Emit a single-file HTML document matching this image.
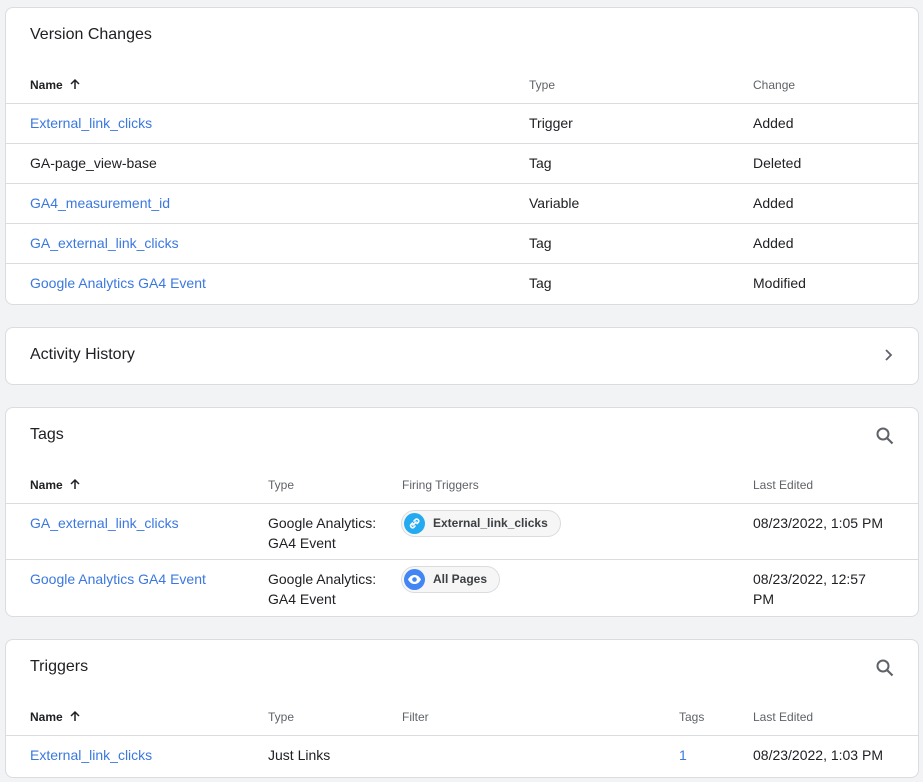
<!DOCTYPE html>
<html><head><meta charset="utf-8"><style>
*{margin:0;padding:0;box-sizing:border-box}
body{width:923px;height:782px;background:#f1f3f4;font-family:"Liberation Sans",Arial,sans-serif;position:relative;overflow:hidden;color:#202124}
.card{position:absolute;left:5px;width:914px;background:#fff;border:1px solid #dadce0;border-radius:8px}
.t{position:absolute;font-size:14px;line-height:20px;white-space:nowrap}
.title{position:absolute;left:24px;font-size:16px;line-height:22px;color:#202124}
.h{position:absolute;font-size:12px;line-height:16px;color:#5f6368;white-space:nowrap}
.hn{color:#202124;font-weight:bold}
.ln{position:absolute;left:0;right:0;height:1px;background:#dadce0}
.a{color:#3a78e0}
.chip{position:absolute;height:27px;border:1px solid #dadce0;border-radius:14px;background:#f6f6f6;font-size:12px;font-weight:bold;color:#3c4043;line-height:25px;padding-left:31px;padding-right:12px}
.ic{position:absolute;left:2px;top:2px;width:21px;height:21px;border-radius:50%}
</style></head><body>

<div class="card" style="top:7px;height:298px">
<div class="title" style="top:16px">Version Changes</div>
<div class="h hn" style="left:24px;top:69px">Name <svg width="12" height="12" viewBox="0 0 12 12" style="vertical-align:-1px;margin-left:3px"><path d="M6 11V2M2 6l4-4 4 4" stroke="#202124" stroke-width="1.5" fill="none"/></svg></div>
<div class="h" style="left:523px;top:69px">Type</div>
<div class="h" style="left:747px;top:69px">Change</div>
<div class="ln" style="top:95px"></div>
<div class="t a" style="left:24px;top:105px">External_link_clicks</div><div class="t" style="left:523px;top:105px">Trigger</div><div class="t" style="left:747px;top:105px">Added</div>
<div class="ln" style="top:135px"></div>
<div class="t" style="left:24px;top:145px">GA-page_view-base</div><div class="t" style="left:523px;top:145px">Tag</div><div class="t" style="left:747px;top:145px">Deleted</div>
<div class="ln" style="top:175px"></div>
<div class="t a" style="left:24px;top:185px">GA4_measurement_id</div><div class="t" style="left:523px;top:185px">Variable</div><div class="t" style="left:747px;top:185px">Added</div>
<div class="ln" style="top:215px"></div>
<div class="t a" style="left:24px;top:225px">GA_external_link_clicks</div><div class="t" style="left:523px;top:225px">Tag</div><div class="t" style="left:747px;top:225px">Added</div>
<div class="ln" style="top:255px"></div>
<div class="t a" style="left:24px;top:265px">Google Analytics GA4 Event</div><div class="t" style="left:523px;top:265px">Tag</div><div class="t" style="left:747px;top:265px">Modified</div>
</div>

<div class="card" style="top:327px;height:58px">
<div class="title" style="top:16px">Activity History</div>
<svg style="position:absolute;left:877px;top:20px" width="12" height="14" viewBox="0 0 12 14"><path d="M3 2l5 5-5 5" stroke="#5f6368" stroke-width="1.8" fill="none"/></svg>
</div>

<div class="card" style="top:407px;height:210px">
<div class="title" style="top:16px">Tags</div>
<svg style="position:absolute;left:869px;top:18px" width="20" height="20" viewBox="0 0 20 20"><circle cx="8" cy="8" r="5.5" stroke="#5f6368" stroke-width="2" fill="none"/><path d="M12 12l5.5 5.5" stroke="#5f6368" stroke-width="2.2"/></svg>
<div class="h hn" style="left:24px;top:69px">Name <svg width="12" height="12" viewBox="0 0 12 12" style="vertical-align:-1px;margin-left:3px"><path d="M6 11V2M2 6l4-4 4 4" stroke="#202124" stroke-width="1.5" fill="none"/></svg></div>
<div class="h" style="left:262px;top:69px">Type</div>
<div class="h" style="left:396px;top:69px">Firing Triggers</div>
<div class="h" style="left:747px;top:69px">Last Edited</div>
<div class="ln" style="top:95px"></div>
<div class="t a" style="left:24px;top:105px">GA_external_link_clicks</div>
<div class="t" style="left:262px;top:105px">Google Analytics:<br>GA4 Event</div>
<div class="chip" style="left:395px;top:102px"><div class="ic" style="background:#24aaf0"><svg width="21" height="21" viewBox="0 0 21 21"><path d="M9 12l3-3M8.5 10l-1.5 1.5a2 2 0 0 0 2.8 2.8L11 13M10 8l1.5-1.5a2 2 0 0 1 2.8 2.8L13 10.5" stroke="#fff" stroke-width="1.6" fill="none" stroke-linecap="round"/></svg></div>External_link_clicks</div>
<div class="t" style="left:747px;top:105px">08/23/2022, 1:05 PM</div>
<div class="ln" style="top:151px"></div>
<div class="t a" style="left:24px;top:161px">Google Analytics GA4 Event</div>
<div class="t" style="left:262px;top:161px">Google Analytics:<br>GA4 Event</div>
<div class="chip" style="left:395px;top:158px"><div class="ic" style="background:#4285f4"><svg width="21" height="21" viewBox="0 0 21 21"><path d="M4 10.5C6 7 8 6 10.5 6S15 7 17 10.5C15 14 13 15 10.5 15S6 14 4 10.5z" fill="#fff"/><circle cx="10.5" cy="10.5" r="2.3" fill="#4285f4"/></svg></div>All Pages</div>
<div class="t" style="left:747px;top:161px">08/23/2022, 12:57<br>PM</div>
</div>

<div class="card" style="top:639px;height:139px">
<div class="title" style="top:16px">Triggers</div>
<svg style="position:absolute;left:869px;top:18px" width="20" height="20" viewBox="0 0 20 20"><circle cx="8" cy="8" r="5.5" stroke="#5f6368" stroke-width="2" fill="none"/><path d="M12 12l5.5 5.5" stroke="#5f6368" stroke-width="2.2"/></svg>
<div class="h hn" style="left:24px;top:69px">Name <svg width="12" height="12" viewBox="0 0 12 12" style="vertical-align:-1px;margin-left:3px"><path d="M6 11V2M2 6l4-4 4 4" stroke="#202124" stroke-width="1.5" fill="none"/></svg></div>
<div class="h" style="left:262px;top:69px">Type</div>
<div class="h" style="left:396px;top:69px">Filter</div>
<div class="h" style="left:673px;top:69px">Tags</div>
<div class="h" style="left:747px;top:69px">Last Edited</div>
<div class="ln" style="top:95px"></div>
<div class="t a" style="left:24px;top:105px">External_link_clicks</div>
<div class="t" style="left:262px;top:105px">Just Links</div>
<div class="t a" style="left:673px;top:105px">1</div>
<div class="t" style="left:747px;top:105px">08/23/2022, 1:03 PM</div>
</div>
</body></html>
